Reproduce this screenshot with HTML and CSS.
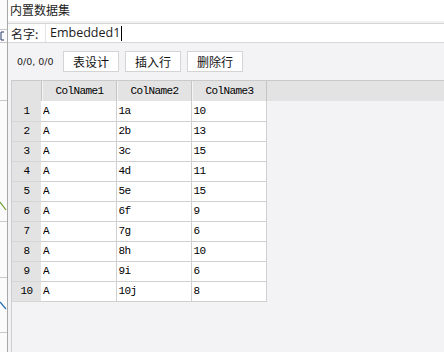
FILE: index.html
```html
<!DOCTYPE html>
<html lang="zh-CN">
<head>
<meta charset="UTF-8">
<title>内置数据集</title>
<link rel="stylesheet" href="styles.css">
</head>
<body>

<div class="behind">
  <svg width="7" height="352" viewBox="0 0 7 352">
    <line x1="0" y1="29.5" x2="7" y2="29.5" stroke="#c8c8c8"/>
    <line x1="0" y1="42.5" x2="7" y2="42.5" stroke="#c8c8c8"/>
    <line x1="0" y1="100.5" x2="7" y2="100.5" stroke="#c8c8c8"/>
    <line x1="0" y1="221.5" x2="7" y2="221.5" stroke="#c8c8c8"/>
    <line x1="0" y1="277.5" x2="7" y2="277.5" stroke="#c8c8c8"/>
    <line x1="0" y1="332.5" x2="7" y2="332.5" stroke="#c8c8c8"/>
    <path d="M0 202 L6 210" stroke="#6a9a2a" stroke-width="1.2"/>
    <path d="M0 302 L6 309" stroke="#2a6fb0" stroke-width="1.2"/>
    <path d="M1 32 L1 40 M1 32 L4 32 M1 40 L4 40" stroke="#2a3a6a" fill="none"/>
  </svg>
</div>

<div class="dialog">
  <div class="title">内置数据集</div>

  <div class="name-row">
    <span class="name-label">名字:</span>
    <div class="name-input">Embedded1<span class="caret"></span></div>
  </div>

  <div class="toolbar">
    <span class="pos">0/0, 0/0</span>
    <button class="btn">表设计</button>
    <button class="btn">插入行</button>
    <button class="btn">删除行</button>
  </div>

  <div class="grid-area">
    <table class="grid">
      <thead>
        <tr>
          <th class="corner"></th>
          <th>ColName1</th>
          <th>ColName2</th>
          <th>ColName3</th>
        </tr>
      </thead>
      <tbody>
        <tr><td class="rh">1</td><td>A</td><td>1a</td><td>10</td></tr>
        <tr><td class="rh">2</td><td>A</td><td>2b</td><td>13</td></tr>
        <tr><td class="rh">3</td><td>A</td><td>3c</td><td>15</td></tr>
        <tr><td class="rh">4</td><td>A</td><td>4d</td><td>11</td></tr>
        <tr><td class="rh">5</td><td>A</td><td>5e</td><td>15</td></tr>
        <tr><td class="rh">6</td><td>A</td><td>6f</td><td>9</td></tr>
        <tr><td class="rh">7</td><td>A</td><td>7g</td><td>6</td></tr>
        <tr><td class="rh">8</td><td>A</td><td>8h</td><td>10</td></tr>
        <tr><td class="rh">9</td><td>A</td><td>9i</td><td>6</td></tr>
        <tr><td class="rh">10</td><td>A</td><td>10j</td><td>8</td></tr>
      </tbody>
    </table>
  </div>
</div>

</body>
</html>
```

FILE: styles.css
```css
body {
  margin: 0;
  width: 444px;
  height: 352px;
  display: flex;
  overflow: hidden;
  font-family: "Noto Sans CJK SC", "Noto Sans", sans-serif;
  color: #222;
  background: #f3f3f5;
}
.behind {
  width: 7px;
  background: #fbfbfb;
  border-right: 1px solid #a8a8a8;
}
.behind svg {
  display: block;
}
.dialog {
  flex: 1;
  display: flex;
  flex-direction: column;
  background: #f3f3f5;
}
.title {
  height: 21px;
  line-height: 19px;
  padding-left: 2px;
  font-size: 12px;
  color: #222;
  background: #fff;
  border-bottom: 2px solid #f0f0f0;
}
.name-row {
  height: 18px;
  display: flex;
  align-items: center;
  background: #fff;
  border-top: 1px solid #d6d6d6;
  border-bottom: 1px solid #d6d6d6;
}
.name-label {
  width: 34px;
  padding-left: 3px;
  font-size: 12px;
  color: #222;
}
.name-input {
  flex: 1;
  height: 18px;
  line-height: 18px;
  padding-left: 4px;
  border-left: 1px solid #e4e4e4;
  font-family: "Open Sans", "Noto Sans", sans-serif;
  font-size: 12.5px;
  color: #1a1a1a;
  display: flex;
  align-items: center;
}
.caret {
  display: inline-block;
  width: 1px;
  height: 15px;
  margin-left: 1px;
  background: #000;
}
.toolbar {
  height: 37px;
  display: flex;
  align-items: center;
  gap: 6px;
  padding-left: 9px;
}
.pos {
  width: 40px;
  font-family: "DejaVu Sans", sans-serif;
  font-size: 9.5px;
  color: #222;
}
.btn {
  width: 56px;
  height: 21px;
  padding: 0;
  margin: 0;
  background: #fff;
  border: 1px solid #d4d4d4;
  font-family: "Noto Sans CJK SC", sans-serif;
  font-size: 12px;
  color: #111;
  line-height: 19px;
}
.grid-area {
  flex: 1;
  margin-left: 3px;
  border-left: 1px solid #cdcdcd;
  border-top: 1px solid #cacaca;
  background: #f3f3f5;
  position: relative;
}
.grid-area::before {
  content: "";
  position: absolute;
  left: 0;
  right: 0;
  top: 0;
  height: 20px;
  background: #e3e3e3;
}
.grid {
  position: relative;
  border-collapse: collapse;
  table-layout: fixed;
  font-family: "Liberation Mono", monospace;
  font-size: 11px;
  letter-spacing: -0.6px;
  color: #000;
}
.grid th,
.grid td {
  height: 19px;
  padding: 0 0 0 2px;
  text-align: left;
  font-weight: normal;
  box-sizing: border-box;
}
.grid th {
  width: 75px;
  height: 20px;
  text-align: center;
  background: #e3e3e3;
  border-right: 1px solid #c4c4c4;
  box-shadow: inset 1px 0 0 #f4f4f4;
}
.grid th.corner {
  width: 29px;
  box-shadow: none;
}
.grid td {
  background: #fff;
  border-right: 1px solid #d0d0d0;
  border-bottom: 1px solid #d0d0d0;
  height: 20px;
}
.grid td.rh {
  padding: 0;
  text-align: center;
  background: #e3e3e3;
  border-right: none;
  border-bottom: 1px solid #d6d6d6;
}
```
